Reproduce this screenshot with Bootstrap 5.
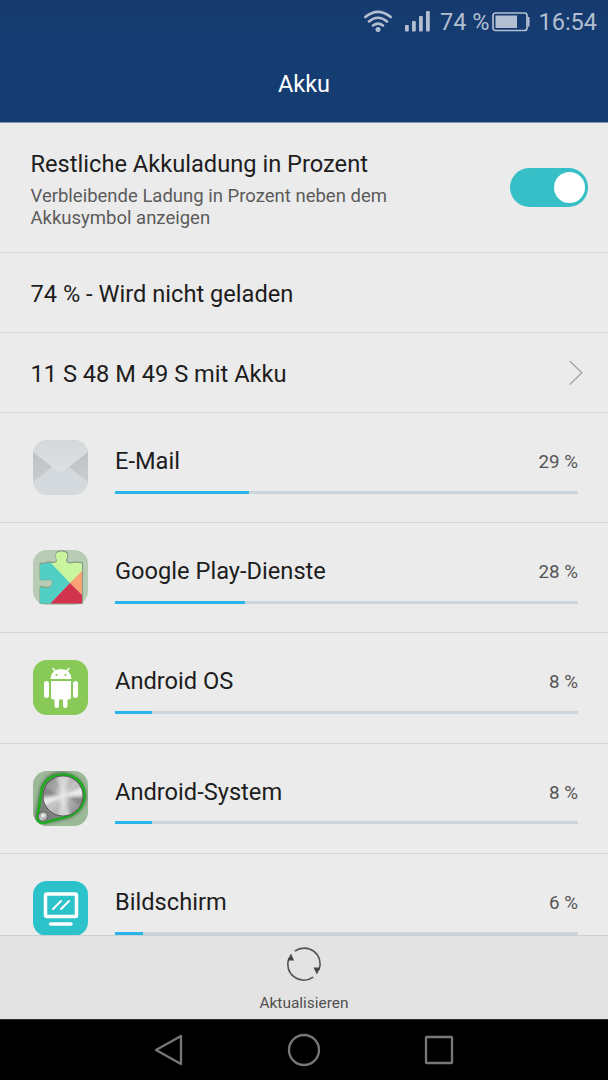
<!DOCTYPE html>
<html lang="de">
<head>
<meta charset="utf-8">
<meta name="viewport" content="width=device-width, initial-scale=1">
<title>Akku</title>
<link rel="stylesheet" href="https://cdn.jsdelivr.net/npm/bootstrap@5.3.0/dist/css/bootstrap.min.css">
<style>
body{font-family:Roboto,"Liberation Sans",sans-serif;background:#ebebeb;color:#1d1d1d;height:1080px;font-size:23.65px;line-height:28px}
svg{display:block;flex:none}
.topbar{height:123px;background:linear-gradient(#163a6f,#153d71 40%,#153d71);border-bottom:1px solid #8391a5;color:#fff}
.status{height:44px;color:#b3bfd1;font-size:23.5px;padding-right:11px}
.page-title{font-size:23.5px;line-height:28px;padding-top:26px}
.entry{border-bottom:1px solid #d3d4d4;flex:none;padding:0 30px 0 30.5px}
.entry-switch{height:130px;padding-right:20px}
.entry-line{height:80px;padding-top:2px}
.hint{font-size:18.5px;line-height:22px;color:#5b5b5b;padding-top:7px}
.toggle{width:78px;height:39px;padding:4px 3px;background:#36bfc6}
.knob{width:31px;height:31px;background:#fff}
.entry-app{height:110.2px;padding:27px 30px 0 33px;gap:27px}
.app-name{padding-top:7px}
.share{font-size:18.8px;color:#555;padding-top:8px}
.meter{height:3px;background:#cbd5da;margin-top:14.8px;border-radius:0}
.meter .progress-bar{background:#29b4e9}
.toolbar{height:84px;background:#e3e3e3;border-top:1px solid #c9d0d3;font-size:15.45px;line-height:20px;color:#505050;padding-top:10px}
.navkeys{height:61px;background:#000;border-top:1px solid #303030}
</style>
</head>
<body class="d-flex flex-column overflow-hidden m-0">
<header class="topbar flex-shrink-0">
  <div class="status d-flex align-items-center justify-content-end">
    <svg width="30" height="24" viewBox="0 0 30 24" fill="none" stroke="currentColor" stroke-width="2.600" stroke-linecap="round"><path d="M2.300 7Q15-3.400 27.700 7M6 11.500Q15 4 24 11.500M10 15.500Q15 11.600 20 15.500"/><circle cx="15" cy="19.500" r="2.500" fill="currentColor" stroke="none"/></svg>
    <svg style="margin-left:12px" width="26" height="24" viewBox="0 0 26 24" fill="currentColor"><rect x="0" y="15" width="3.800" height="6.500" rx="1"/><rect x="7" y="11" width="3.800" height="10.500" rx="1"/><rect x="14" y="6" width="3.800" height="15.500" rx="1"/><rect x="21" y="1" width="3.800" height="20.500" rx="1"/></svg>
    <span style="margin-left:9.5px">74 %</span>
    <svg style="margin-left:3px" width="39" height="20" viewBox="0 0 39 20"><rect x="1" y="1" width="34" height="17.500" rx="2.500" fill="none" stroke="currentColor" stroke-width="1.700"/><path d="M3.500 3.500H25V16H3.500ZM35.500 5H37.500V14.500H35.500Z" fill="currentColor"/></svg>
    <span style="margin-left:7px">16:54</span>
  </div>
  <h1 class="page-title text-center fw-normal m-0">Akku</h1>
</header>

<main class="flex-grow-1 overflow-hidden d-flex flex-column">
  <section class="entry entry-switch d-flex justify-content-between align-items-start">
    <div style="padding-top:27px">
      <div>Restliche Akkuladung in Prozent</div>
      <div class="hint">Verbleibende Ladung in Prozent neben dem<br>Akkusymbol anzeigen</div>
    </div>
    <div class="toggle rounded-pill d-flex justify-content-end" style="margin-top:45.3px" role="switch" aria-checked="true"><span class="knob rounded-circle"></span></div>
  </section>
  <section class="entry entry-line d-flex align-items-center"><span>74 % - Wird nicht geladen</span></section>
  <section class="entry entry-line d-flex align-items-center justify-content-between" style="padding-right:25px"><span>11 S 48 M 49 S mit Akku</span>
    <svg width="14" height="26" viewBox="0 0 14 26" fill="none" stroke="#a2a2a2" stroke-width="1.300"><path d="M.8 0L12.800 11.700L.8 23.500"/></svg>
  </section>

  <section class="entry entry-app d-flex">
    <svg width="55" height="55" viewBox="0 0 55 55"><defs><clipPath id="tile"><rect width="55" height="55" rx="14"/></clipPath><linearGradient id="flap" x2="0" y2="1"><stop stop-color="#d3d8db"/><stop offset="1" stop-color="#dde1e3"/></linearGradient><linearGradient id="side" x2="0" y2="1"><stop stop-color="#bdc0c4"/><stop offset="1" stop-color="#cacdd0"/></linearGradient></defs>
      <g clip-path="url(#tile)"><rect width="55" height="55" fill="#d3d9dc"/><path d="M0 11L19 27L0 42ZM55 11L36 27L55 42Z" fill="url(#side)"/><path d="M0 0H55V12L31 30.500Q27.500 33 24 30.500L0 12Z" fill="url(#flap)"/></g></svg>
    <div class="flex-grow-1"><div class="d-flex justify-content-between"><span class="app-name">E-Mail</span><span class="share">29 %</span></div><div class="progress meter"><div class="progress-bar" style="width:29%"></div></div></div>
  </section>

  <section class="entry entry-app d-flex">
    <svg width="55" height="55" viewBox="0 0 55 55"><defs><clipPath id="piece"><path d="M7 14H10Q15 12 20 13Q24 13 24 10Q22 7 23 4Q24 1.500 28 1.500Q33 1.500 34 4Q35 7 33 10Q33 13 37 13.500Q43 12 49 13.500V53.500H7V38Q8 36 11 38Q19 39 19.500 33Q19 28 11 30Q7 31 7 28Z"/></clipPath></defs>
      <rect width="55" height="55" rx="14" fill="#b8ccb5"/><path d="M7 14H10Q15 12 20 13Q24 13 24 10Q22 7 23 4Q24 1.500 28 1.500Q33 1.500 34 4Q35 7 33 10Q33 13 37 13.500Q43 12 49 13.500V53.500H7V38Q8 36 11 38Q19 39 19.500 33Q19 28 11 30Q7 31 7 28Z" transform="translate(.3 -.4)" fill="none" stroke="#849a85" stroke-width="1.500"/>
      <g clip-path="url(#piece)"><path d="M7 12H18L37 33L16 55H7Z" fill="#51cfc5"/><path d="M17 12V0H38V12H49V21L37 33Z" fill="#c8f59d"/><path d="M49 21V45L37 33Z" fill="#fca273"/><path d="M37 33L49 45V55H16Z" fill="#d2344f"/></g></svg>
    <div class="flex-grow-1"><div class="d-flex justify-content-between"><span class="app-name">Google Play-Dienste</span><span class="share">28 %</span></div><div class="progress meter"><div class="progress-bar" style="width:28%"></div></div></div>
  </section>

  <section class="entry entry-app d-flex">
    <svg width="55" height="55" viewBox="0 0 55 55"><rect width="55" height="55" rx="14" fill="#88c957"/><g fill="#fff"><path d="M17.500 19Q18.500 9 28 9T38.500 19ZM18 21H38V37Q38 39.500 35.500 39.500H34.500V45.500Q34.500 48 32.200 48T30 45.500V39.500H26V45.500Q26 48 23.800 48T21.500 45.500V39.500H20.500Q18 39.500 18 37Z"/><rect x="11" y="21" width="5" height="17" rx="2.500"/><rect x="40" y="21" width="5" height="17" rx="2.500"/></g><path d="M20 8.500L23 12M36 8.500L33 12" stroke="#fff" stroke-width="1.500" stroke-linecap="round"/><circle cx="23.500" cy="15" r="1.100" fill="#88c957"/><circle cx="32.500" cy="15" r="1.100" fill="#88c957"/></svg>
    <div class="flex-grow-1"><div class="d-flex justify-content-between"><span class="app-name">Android OS</span><span class="share">8 %</span></div><div class="progress meter"><div class="progress-bar" style="width:8%"></div></div></div>
  </section>

  <section class="entry entry-app d-flex">
    <svg width="55" height="55" viewBox="0 0 55 55"><defs><linearGradient id="steel" x2="1" y2="1"><stop stop-color="#8a8a8a"/><stop offset=".3" stop-color="#a8a8a8"/><stop offset=".5" stop-color="#c4c4c4"/><stop offset=".75" stop-color="#a4a4a4"/><stop offset="1" stop-color="#777"/></linearGradient><radialGradient id="pale"><stop stop-color="#fff"/><stop offset="1" stop-color="#eee" stop-opacity="0"/></radialGradient><filter id="soft"><feGaussianBlur stdDeviation="1.800"/></filter><clipPath id="dial"><circle cx="30" cy="25" r="19.500"/></clipPath></defs>
      <g clip-path="url(#tile)"><rect width="55" height="55" fill="#9bb897"/><path d="M9 17C14 3 27 0 38 5C52 11 56 28 46 38C41 44 35 46 29 47L12 51Q2 51 4 43Z" fill="#4c554a" stroke="#4c554a" stroke-width="4" opacity=".65" filter="url(#soft)"/><path d="M9 17C13 7 21 3.500 31 3.500C44 4 52 14 51.500 26C50 37 43 43 33 46L12 51.500Q4 53 4.500 46Z" fill="#7d827d" stroke="#1dae20" stroke-width="2.700"/><circle cx="30" cy="25" r="20" fill="url(#steel)" stroke="#555" stroke-width="1"/><g clip-path="url(#dial)"><g filter="url(#soft)"><path d="M30 25L8 27V37ZM30 25L53 14V25Z" fill="#fff" opacity=".75"/><path d="M30 25L22 3H38ZM30 25L24 47H39Z" fill="#fff" opacity=".5"/><path d="M30 25L8 14V25ZM30 25L53 27V37Z" fill="#555" opacity=".35"/></g></g><circle cx="30" cy="25" r="11" fill="url(#pale)" opacity=".6"/><circle cx="10" cy="45.500" r="4.800" fill="url(#steel)" stroke="#555" stroke-width=".8"/><circle cx="10" cy="44.500" r="3" fill="url(#pale)"/></g></svg>
    <div class="flex-grow-1"><div class="d-flex justify-content-between"><span class="app-name">Android-System</span><span class="share">8 %</span></div><div class="progress meter"><div class="progress-bar" style="width:8%"></div></div></div>
  </section>

  <section class="entry entry-app d-flex">
    <svg width="55" height="55" viewBox="0 0 55 55"><rect width="55" height="55" rx="14" fill="#2bc2ca"/><g fill="none" stroke="#fff" stroke-linecap="round"><rect x="12.500" y="13" width="31" height="22.500" rx="1.500" stroke-width="3.500"/><path d="M20 28L28 20M28 28L36 20" stroke-width="2"/><path d="M17.500 43H38" stroke-width="3.500"/></g></svg>
    <div class="flex-grow-1"><div class="d-flex justify-content-between"><span class="app-name">Bildschirm</span><span class="share">6 %</span></div><div class="progress meter"><div class="progress-bar" style="width:6%"></div></div></div>
  </section>
</main>

<footer class="toolbar flex-shrink-0 d-flex flex-column align-items-center">
  <svg width="36" height="36" viewBox="0 0 36 36"><g fill="none" stroke="#555" stroke-width="1.600"><path d="M8.800 5.100A16 16 0 0 1 33 24M27.200 31.100A16 16 0 0 1 3 12"/></g><path d="M5 7.500L8 14.500L1.500 14.500ZM31 28.500L27.500 21.500L34 21.500Z" fill="#444"/></svg>
  <span style="margin-top:10.5px">Aktualisieren</span>
</footer>
<nav class="navkeys flex-shrink-0 d-flex justify-content-center align-items-center" style="gap:101px">
  <svg width="34" height="34" viewBox="0 0 34 34" fill="none" stroke="#777" stroke-width="2.300" stroke-linejoin="round"><path d="M4 17L29 3V31Z"/></svg>
  <svg width="34" height="34" viewBox="0 0 34 34" fill="none" stroke="#777" stroke-width="2.300"><circle cx="17" cy="17" r="15"/></svg>
  <svg width="34" height="34" viewBox="0 0 34 34" fill="none" stroke="#777" stroke-width="2.300" stroke-linejoin="round"><rect x="4" y="4" width="26" height="26" rx=".7"/></svg>
</nav>
<script src="https://cdn.jsdelivr.net/npm/bootstrap@5.3.0/dist/js/bootstrap.bundle.min.js"></script>
</body>
</html>
